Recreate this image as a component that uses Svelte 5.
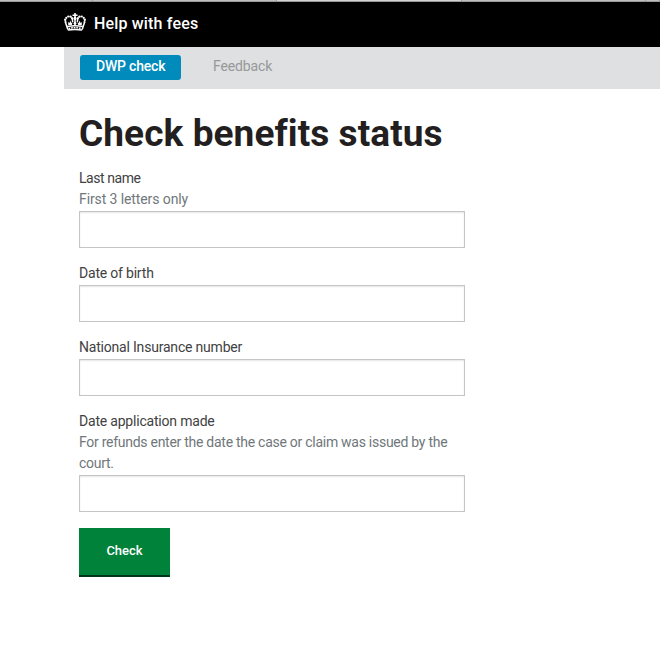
<script>
  const fields = [
    { id: 'last-name', label: 'Last name', hint: 'First 3 letters only' },
    { id: 'dob', label: 'Date of birth' },
    { id: 'ni-number', label: 'National Insurance number' },
    {
      id: 'date-made',
      label: 'Date application made',
      hint: 'For refunds enter the date the case or claim was issued by the court.'
    }
  ];
</script>

<div class="page">
  <div class="tabs"><i></i><i></i><i class="active"></i><i></i><i></i></div>
  <header>
    <svg class="crown" width="22" height="18" viewBox="0 0 22 18" fill="#fff" aria-hidden="true">
      <path d="M10.200 0h1.600v1.500h1.700v1.600h-1.700v1.600h-1.600V3.100H8.500V1.500h1.700z" />
      <circle cx="11" cy="5.400" r="1.600" />
      <circle cx="6.500" cy="3.600" r="1.200" /><circle cx="4.200" cy="3.500" r="1.100" />
      <circle cx="2.300" cy="4.800" r="1.100" /><circle cx="1.200" cy="6.700" r="1.200" />
      <circle cx="1.500" cy="9" r="1.100" /><circle cx="8" cy="5.200" r="1.100" />
      <circle cx="15.500" cy="3.600" r="1.200" /><circle cx="17.800" cy="3.500" r="1.100" />
      <circle cx="19.700" cy="4.800" r="1.100" /><circle cx="20.800" cy="6.700" r="1.200" />
      <circle cx="20.500" cy="9" r="1.100" /><circle cx="14" cy="5.200" r="1.100" />
      <path d="M1.500 9.500l2.300 7M20.500 9.500l-2.300 7M8.200 5.500l.5 3.500M13.800 5.500l-.5 3.500M11 6v6" fill="none" stroke="#fff" stroke-width="1.500" />
      <path d="M4.200 12V8.900l1.300 1 .8-2.500.9 2.500 1.400-.9-.8 3zM17.800 12V8.900l-1.300 1-.8-2.500-.9 2.500-1.400-.9.8 3zM9.200 10.200 11 8.400l1.800 1.800L11 12z" />
      <path d="M3.200 13.600Q11 11.800 18.800 13.600M3.800 17Q11 15.900 18.200 17" fill="none" stroke="#fff" stroke-width="1.500" />
      <path d="M4.500 15.400Q11 14 17.500 15.400" fill="none" stroke="#fff" stroke-width="1.400" stroke-dasharray="1.800 .8" />
    </svg>
    <span class="brand">Help with fees</span>
  </header>
  <nav>
    <span class="current">DWP check</span>
    <span class="link">Feedback</span>
  </nav>
  <main>
    <h1>Check benefits status</h1>
    <form>
      {#each fields as f}
        <div class="field {f.id}">
          <label for={f.id}>{f.label}</label>
          {#if f.hint}<p>{f.hint}</p>{/if}
          <input id={f.id} type="text" />
        </div>
      {/each}
      <button type="button">Check</button>
    </form>
  </main>
</div>

<style>
  :global(body) {
    margin: 0;
    background: #fff;
  }
  .page {
    height: 646px;
    overflow: hidden;
    font-family: Roboto, 'Liberation Sans', sans-serif;
    font-size: 14px;
    line-height: 21px;
    color: #3f4142;
  }
  .tabs {
    display: grid;
    grid-template-columns: 93px 184px 185px 184px 1fr;
    height: 2px;
  }
  .tabs i {
    background: #bdbebe;
    border-right: 1px solid #999;
    border-bottom: 1px solid #989898;
  }
  .tabs .active {
    background: #d2d3d3;
  }
  header {
    display: flex;
    height: 45px;
    box-sizing: border-box;
    padding-left: 64px;
    background: #000;
  }
  .crown {
    margin-top: 11px;
  }
  .brand {
    margin: 11px 0 0 8px;
    color: #fff;
    font-size: 16px;
    font-weight: 500;
    letter-spacing: 0.17px;
  }
  nav {
    display: flex;
    height: 42px;
    box-sizing: border-box;
    margin-left: 64px;
    padding: 8px 16px;
    background: #dee0e2;
    line-height: 23px;
  }
  .current {
    width: 101px;
    height: 25px;
    box-sizing: border-box;
    padding-left: 16px;
    border-radius: 3px;
    background: #008bbc;
    color: #fff;
    font-weight: 500;
    letter-spacing: -0.2px;
  }
  .link {
    margin-left: 32px;
    color: #969899;
    letter-spacing: -0.14px;
  }
  main {
    padding: 25px 0 0 79px;
  }
  h1 {
    margin: 0 0 14px;
    color: #231f20;
    font-size: 37px;
    font-weight: 700;
    letter-spacing: 0.08px;
    line-height: 40px;
    white-space: nowrap;
  }
  .field {
    width: 386px;
    margin-bottom: 15px;
  }
  label {
    display: block;
    letter-spacing: -0.2px;
  }
  .last-name label {
    letter-spacing: -0.45px;
  }
  p {
    margin: 0;
    color: #6f777b;
    letter-spacing: -0.27px;
  }
  .last-name p {
    letter-spacing: -0.1px;
  }
  input {
    display: block;
    width: 386px;
    height: 37px;
    margin: 1px 0 0;
    box-sizing: border-box;
    border: 1px solid #c4c6c6;
    border-radius: 0;
    background: #fff;
    box-shadow: inset 0 1px 2px #e6e6e6;
    outline: none;
  }
  .field + .field {
    padding-top: 0;
  }
  button {
    display: block;
    width: 91px;
    height: 49px;
    margin: 16px 0 0;
    padding: 0 0 4px;
    border: 0;
    border-radius: 0;
    background: #00823b;
    box-shadow: inset 0 -2px #003618;
    color: #fff;
    font: 500 13px/20px Roboto, sans-serif;
  }
</style>
